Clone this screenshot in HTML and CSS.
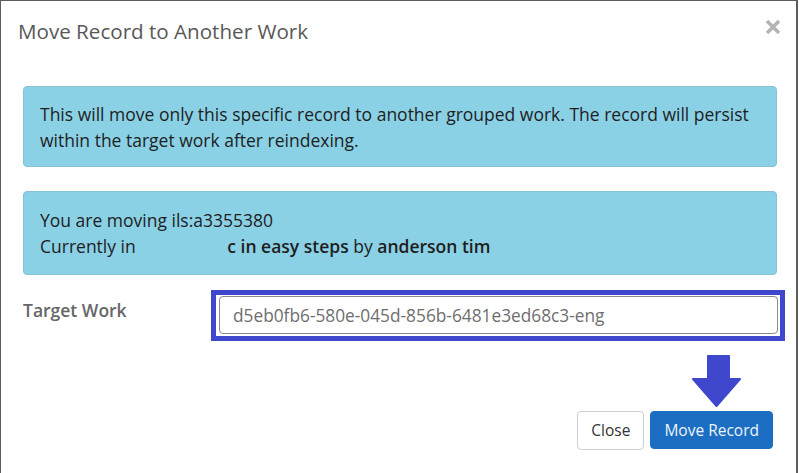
FILE: index.html
```html
<!DOCTYPE html>
<html lang="en">
<head>
<meta charset="utf-8">
<title>Move Record to Another Work</title>
<link rel="stylesheet" href="styles.css">
</head>
<body>
<div class="modal">
  <div class="modal-header">
    <h4 class="modal-title">Move Record to Another Work</h4>
    <button class="close" aria-label="Close">
      <svg width="16" height="16" viewBox="0 0 16 16"><path d="M2 2 L14 14 M14 2 L2 14" stroke="#b4b4b4" stroke-width="3.6" stroke-linecap="butt"/></svg>
    </button>
  </div>
  <div class="modal-body">
    <div class="alert">This will move only this specific record to another grouped work. The record will persist within the target work after reindexing.</div>
    <div class="alert alert-second">You are moving ils:a3355380<br>Currently in <span class="gap"></span><strong>c in easy steps</strong> by <strong>anderson tim</strong></div>
    <div class="form-row">
      <label class="form-label" for="target">Target Work</label>
      <div class="highlight"><input class="form-input" id="target" type="text" value="d5eb0fb6-580e-045d-856b-6481e3ed68c3-eng"></div>
    </div>
  </div>
  <div class="modal-footer">
    <button class="btn">Close</button>
    <div class="primary-wrap">
      <svg class="arrow" width="49" height="53" viewBox="0 0 49 53"><path d="M16 1 H37 V24 H48 L24.5 51 L1 24 H16 Z" fill="#3f48cc" stroke="#3f48cc" stroke-width="2" stroke-linejoin="round"/></svg>
      <button class="btn btn-primary">Move Record</button>
    </div>
  </div>
</div>
</body>
</html>
```
FILE: styles.css
```css
html, body {
  margin: 0;
  padding: 0;
  background: #fff;
}
body {
  font-family: "Open Sans", "Noto Sans", sans-serif;
  font-size: 17.5px;
  color: #222;
}
.modal {
  box-sizing: border-box;
  height: 473px;
  margin-right: 1px;
  border: 1px solid #5c5c5c;
  border-bottom: none;
  border-right-width: 2px;
  background: #fff;
  overflow: hidden;
}
.modal-header {
  display: flex;
  justify-content: space-between;
  align-items: flex-start;
  padding: 17px 15px 16px 17px;
}
.modal-title {
  margin: 0;
  font-size: 20.6px;
  line-height: 27px;
  font-weight: 400;
  color: #585858;
}
.close {
  border: 0;
  background: none;
  padding: 0;
  margin-top: 1px;
  width: 16px;
  height: 16px;
  display: block;
  cursor: pointer;
}
.close svg { display: block; }
.modal-body {
  padding: 25px 19px 0 22px;
}
.alert {
  background: #8bd1e6;
  border: 1px solid #86c2d4;
  border-radius: 4px;
  padding: 14px 16px 13px;
  line-height: 26px;
  color: #1e1e1e;
}
.alert-second {
  margin-top: 24px;
  padding: 15px 16px 15px;
}
.alert strong { font-weight: 600; }
.gap {
  display: inline-block;
  width: 87px;
}
.form-row {
  display: flex;
  align-items: flex-start;
  margin-top: 15px;
}
.form-label {
  flex: none;
  width: 188px;
  padding-top: 7px;
  line-height: 26px;
  font-weight: 600;
  color: #666;
}
.highlight {
  flex: none;
  border: 5px solid #3f48cc;
  padding: 1px 2px 2px 3px;
}
.form-input {
  display: block;
  box-sizing: border-box;
  width: 559px;
  height: 38px;
  margin: 0;
  padding: 6px 12px 6px 13px;
  border: 1px solid #8a8a8a;
  border-radius: 4px;
  font-family: "Open Sans", "Noto Sans", sans-serif;
  font-size: 17.3px;
  color: #6e6e6e;
  background: #fff;
}
.modal-footer {
  display: flex;
  justify-content: flex-end;
  align-items: flex-start;
  gap: 6px;
  padding: 70px 23px 0 0;
}
.primary-wrap {
  position: relative;
}
.arrow {
  position: absolute;
  left: 42px;
  top: -56px;
  display: block;
}
.btn {
  display: block;
  box-sizing: border-box;
  height: 39px;
  padding: 0 13px;
  border: 1px solid #cfcfcf;
  border-radius: 4px;
  background: #fff;
  font-family: "Open Sans", "Noto Sans", sans-serif;
  font-size: 15.5px;
  line-height: 37px;
  color: #333;
}
.btn-primary {
  height: 38px;
  line-height: 36px;
  padding: 0 13px;
  background: #1b6ec2;
  border-color: #1b6ec2;
  color: #eef4fb;
}
```
